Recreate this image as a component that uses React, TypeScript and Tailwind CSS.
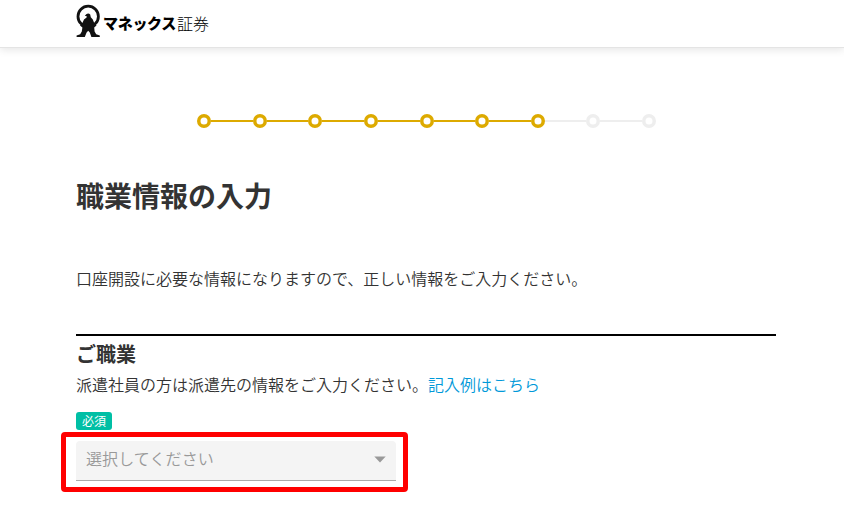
import { clsx } from 'clsx';

const TOTAL_STEPS = 9;
const CURRENT_STEP = 7;

function Logo() {
  return (
    <div className="flex items-center text-black">
      <svg width="26" height="34" viewBox="0 0 26 34" className="shrink-0">
        <circle cx="13.2" cy="12.4" r="10.2" fill="none" stroke="#111" strokeWidth="2.8" />
        <path
          d="M9.8 12 L11.2 10.2 Q13.6 8.7 15.2 10.6 L15.8 13.2 L17.8 15.6 L19.2 19 L21.5 21.6 L19.2 23.6 L19.6 27.6 L21.2 30.2 L24.8 31.4 L24.8 33 H16.4 L14.8 28.6 L13.2 26.8 L11.6 28.6 L9.8 33 H1.6 L1.6 31.6 L5.2 30.2 L6.8 27.6 L7.4 23.6 L5 21.6 L7.4 19 L9 15.6 L11.6 13.4 L11.6 12 Z"
          fill="#111"
        />
      </svg>
      <div className="ml-[2px] flex items-center whitespace-nowrap pt-[3px] leading-none">
        <span className="text-[15px] font-black tracking-[-0.3px]">マネックス</span>
        <span className="ml-px text-[16px] font-light">証券</span>
      </div>
    </div>
  );
}

function StepIndicator() {
  return (
    <ol className="ml-[121px] flex w-[459px] items-center">
      {Array.from({ length: TOTAL_STEPS }, (_, i) => {
        const active = i < CURRENT_STEP;
        return (
          <li
            key={i}
            className={clsx(
              'flex items-center',
              i > 0 && 'flex-1',
              active ? 'text-[#ddaa00]' : 'text-[#eeeeee]'
            )}
          >
            {i > 0 && <span className="h-[2px] flex-1 bg-current" />}
            <svg width="14" height="14" viewBox="0 0 14 14" className="shrink-0">
              <circle cx="7" cy="7" r="5.25" fill="none" stroke="currentColor" strokeWidth="3.5" />
            </svg>
          </li>
        );
      })}
    </ol>
  );
}

export default function App() {
  return (
    <div className="h-[521px] overflow-hidden bg-white font-['Noto_Sans_CJK_JP',sans-serif] text-[#333]">
      <header className="flex h-[48px] items-start border-b border-[#e4e4e4] pl-[75px] pt-1 shadow-[0_2px_8px_rgba(0,0,0,0.1)]">
        <Logo />
      </header>

      <main className="ml-[76px] w-[700px] pt-[66px]">
        <StepIndicator />

        <h1 className="mt-[47px] text-[28px] font-bold leading-[40px]">職業情報の入力</h1>

        <p className="mt-[51px] text-base font-[350] leading-6">
          口座開設に必要な情報になりますので、正しい情報をご入力ください。
        </p>

        <section className="mt-[44px] border-t-2 border-black pt-1">
          <h2 className="text-xl font-bold leading-[28px]">ご職業</h2>
          <p className="mt-1 text-base font-[350] leading-6">
            派遣社員の方は派遣先の情報をご入力ください。
            <a href="#" className="text-[#0099d9]">記入例はこちら</a>
          </p>

          <span className="mt-4 flex h-[18px] w-9 items-center justify-center rounded-[3px] bg-[#00bfa5] text-xs leading-none text-white">
            必須
          </span>

          <div className="-ml-[15px] mt-[2px] w-[347px] rounded-[4px] border-[5px] border-[#ff0000] pb-[6px] pl-[10px] pr-[7px] pt-[4px]">
            <button
              type="button"
              className="flex h-10 w-full items-center justify-between rounded-t-[4px] border-b border-[#aaa] bg-[#f4f4f4] px-[10px] text-base font-[350] text-[#999]"
            >
              <span className="pb-[5px] tracking-[0.1px]">選択してください</span>
              <svg width="12" height="7" viewBox="0 0 12 7" fill="#999" className="mb-[2px]">
                <path d="M0.3 0.5h11.4L6 6.5z" />
              </svg>
            </button>
          </div>
        </section>
      </main>
    </div>
  );
}
